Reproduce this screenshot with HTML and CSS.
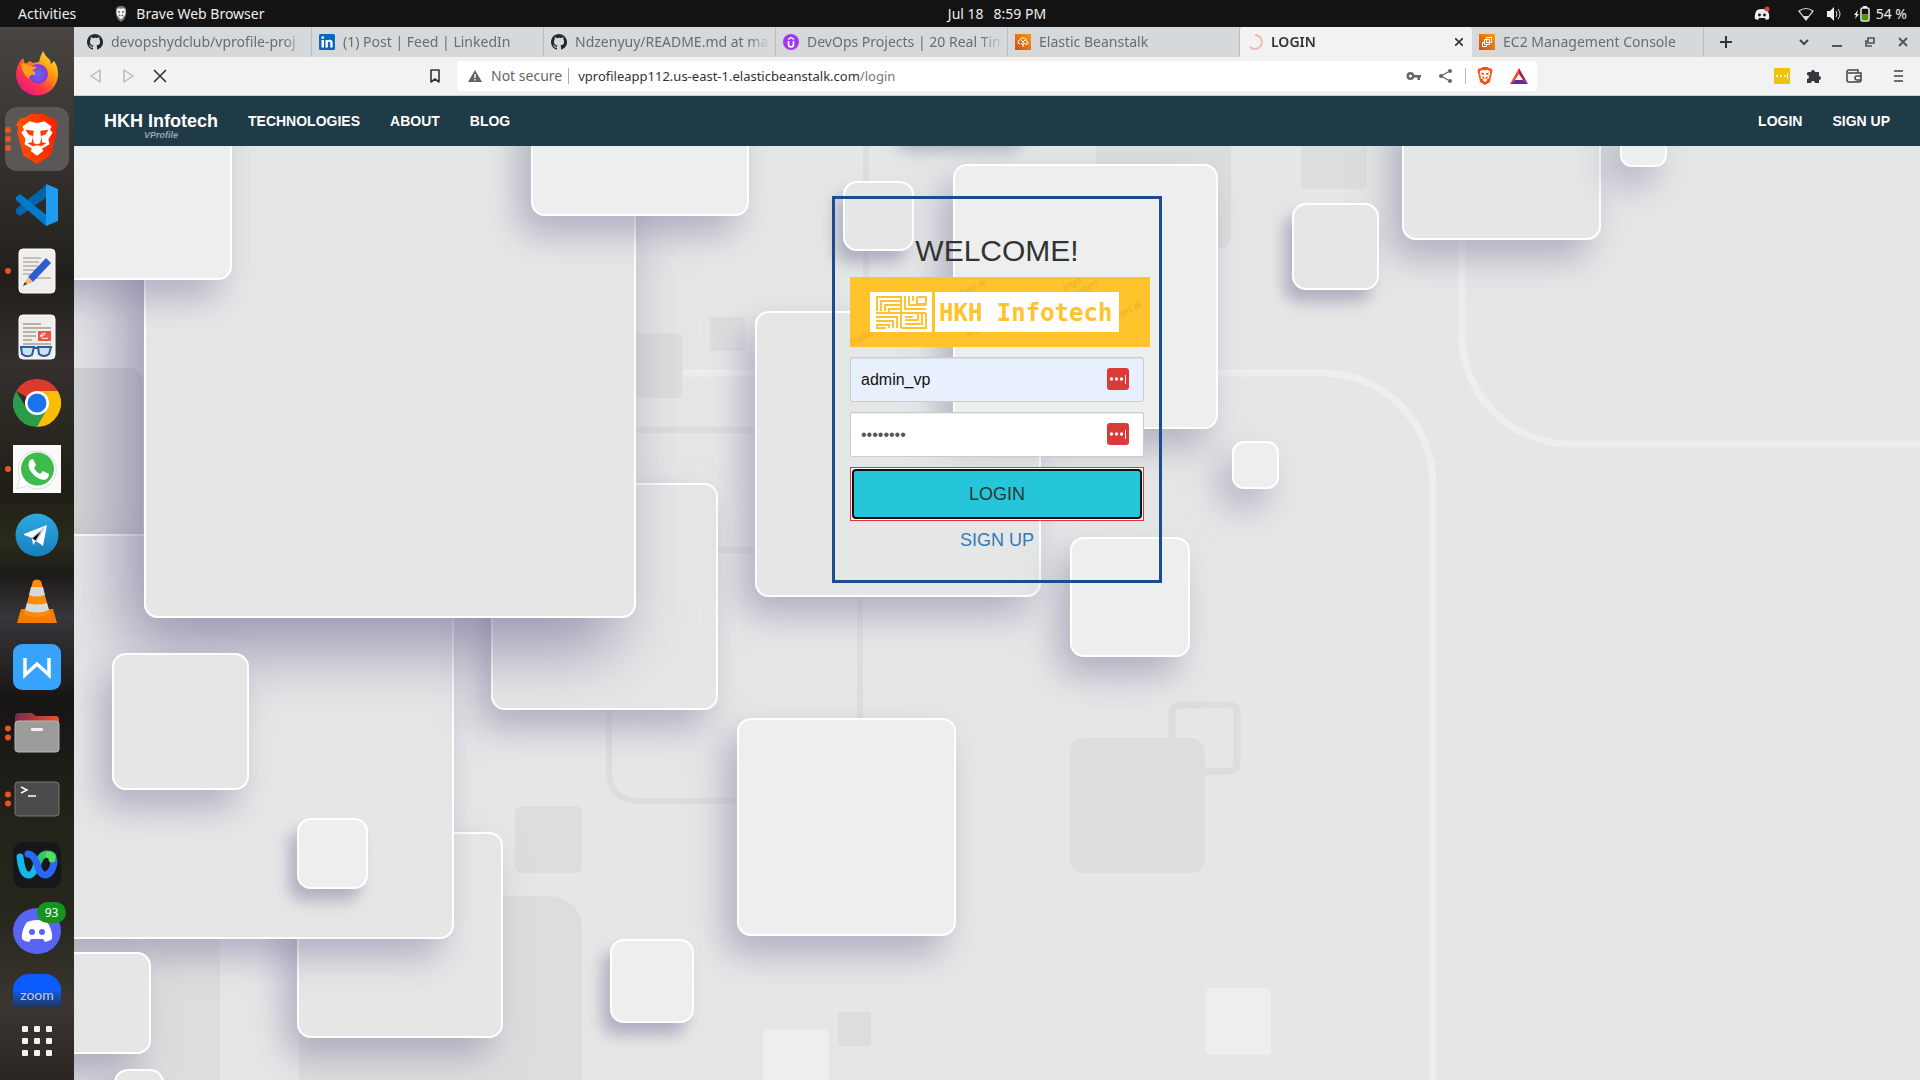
FILE: index.html
```html
<!DOCTYPE html>
<html lang="en">
<head>
<meta charset="utf-8">
<title>LOGIN</title>
<link rel="stylesheet" href="styles.css">
</head>
<body>
<svg class="defs" aria-hidden="true">
  <defs>
    <symbol id="github" viewBox="0 0 16 16"><path fill="#24292f" d="M8 0C3.58 0 0 3.58 0 8c0 3.54 2.29 6.53 5.47 7.59.4.07.55-.17.55-.38v-1.49c-2.01.37-2.53-.49-2.69-.94-.09-.23-.48-.94-.82-1.13-.28-.15-.68-.52-.01-.53.63-.01 1.08.58 1.23.82.72 1.21 1.87.87 2.33.66.07-.52.28-.87.51-1.07-1.78-.2-3.64-.89-3.64-3.95 0-.87.31-1.59.82-2.15-.08-.2-.36-1.02.08-2.12 0 0 .67-.21 2.2.82A7.7 7.7 0 0 1 8 3.87c.68 0 1.36.09 2 .27 1.53-1.04 2.2-.82 2.2-.82.44 1.1.16 1.92.08 2.12.51.56.82 1.27.82 2.15 0 3.07-1.87 3.75-3.65 3.95.29.25.54.73.54 1.48v2.2c0 .21.15.46.55.38A8 8 0 0 0 8 0Z"/></symbol>
    <linearGradient id="aws" x1="0" y1="1" x2="1" y2="0"><stop stop-color="#c8511b"/><stop offset="1" stop-color="#f90"/></linearGradient>
    <linearGradient id="lionfill" x1="0" x2="1"><stop stop-color="#ff5500"/><stop offset="1" stop-color="#ff2000"/></linearGradient>
    <symbol id="lionface" viewBox="0 0 40 48"><path fill="#fff" d="m6 12 7-5 5 1.500h4L27 7l7 5-1.500 3 2.500 3-4 6 1 5-7 4 1 2.500-6 4.500-6-4.500 1-2.500-7-4 1-5-4-6 2.500-3Z"/><path fill="#ff3d0b" d="m9 15 8 1-1 7 1 5 3 1 3-1 1-5-1-7 8-1-3 5-4 1 1 6 4 1-5 3-4-1-4 1-5-3 4-1 1-6-4-1Z"/></symbol>
    <symbol id="passdots" viewBox="0 0 22 22"><rect width="22" height="22" rx="3" fill="#da3b38"/><g fill="#fff"><circle cx="4.500" cy="11" r="1.700"/><circle cx="9.500" cy="11" r="1.700"/><circle cx="14.500" cy="11" r="1.700"/><path d="M18 7h1v9h-1z"/></g></symbol>
  </defs>
</svg>

<header class="topbar">
  <div class="topbar-left">
    <span>Activities</span>
    <span class="app-name"><svg width="14" height="16" viewBox="0 0 40 48"><path fill="#777" d="m9 3 5-3h12l5 3 5 5-2 5 2 10-6 17-10 8-10-8L4 23l2-10-2-5Z"/><use href="#lionface"/></svg>Brave Web Browser</span>
  </div>
  <div class="topbar-clock"><span>Jul 18</span><span>8:59 PM</span></div>
  <div class="topbar-right">
    <svg class="tray-discord" width="16" height="16" viewBox="0 0 16 16"><path fill="#eee" d="M3 4q5-2 10 0 3 4 2 9l-3 1-1-2H5l-1 2-3-1Q0 8 3 4Z"/><circle cx="5.500" cy="9" r="1.400" fill="#131313"/><circle cx="10.500" cy="9" r="1.400" fill="#131313"/><circle cx="13" cy="3" r="2.500" fill="#e33f3c"/></svg>
    <svg width="16" height="16" viewBox="0 0 16 16"><path fill="none" stroke="#ddd" stroke-width="1.200" d="M1 5q7-5 14 0L8 14Z"/><path fill="#ddd" d="M5 10h6l-3 4Z"/></svg>
    <svg width="16" height="16" viewBox="0 0 16 16"><path fill="#eee" d="M1 5h3l4-4v14l-4-4H1Z"/><path fill="none" stroke="#ddd" d="M10 5q2 3 0 6M12 3q4 5 0 10"/></svg>
    <span class="battery"><svg width="16" height="18" viewBox="0 0 16 18"><path fill="#eee" d="M4 5 0 10h2l-1 4 4-5H3Z"/><rect x="7" y="3" width="8" height="13" rx="1.500" fill="none" stroke="#eee" stroke-width="1.500"/><path fill="#eee" d="M9 1h4v2H9z"/><path fill="#4e9a06" d="M8 9h6v6H8z"/></svg>54 %</span>
  </div>
</header>

<div class="desktop">
  <nav class="dock" aria-label="Dock">
    <a class="slot" href="#firefox" aria-label="Firefox"><svg width="44" height="46" viewBox="0 0 44 46"><defs><linearGradient id="ff" x1="1" y1="0" x2=".2" y2="1"><stop stop-color="#fff44f"/><stop offset=".4" stop-color="#ff980e"/><stop offset=".7" stop-color="#ff3647"/><stop offset="1" stop-color="#e31587"/></linearGradient><radialGradient id="ffp"><stop stop-color="#5b6df8"/><stop offset="1" stop-color="#9032d8"/></radialGradient></defs><path fill="url(#ff)" d="M28 1q2 5 7 9l1 4 3-3q4 5 4 13A21 21 0 0 1 1 25Q1 15 8 8l2 6 5-3 3 2 6-1q1-6 4-11Z"/><circle cx="23" cy="24" r="10" fill="url(#ffp)"/><path fill="#ffa117" d="M6 14q5-2 8 2l8 1-5 4q4 0 3 4-6-1-6 4-7-5-8-15Z"/></svg></a>
    <a class="slot" href="#brave" aria-label="Brave"><span class="dots"><i></i><i></i><i></i></span><span class="running"><svg width="42" height="50" viewBox="0 0 40 48"><path fill="url(#lionfill)" d="m9 3 5-3h12l5 3 5 1 4 6-2 4 1 4-6 22-13 8-13-8L1 18l1-4-2-4 4-6Z"/><use href="#lionface"/></svg></span></a>
    <a class="slot" href="#code" aria-label="Code"><svg width="42" height="42" viewBox="0 0 42 42"><path fill="#0065a9" d="m30 1 4 10L4 32l-4-3v-4Z"/><path fill="#007acc" d="m4 10 29 23-3 9L0 16v-3Z"/><path fill="#1f9cf0" d="m30 0 12 5v32l-12 5Z"/></svg></a>
    <a class="slot" href="#editor" aria-label="Text Editor"><span class="dots"><i></i></span><svg width="38" height="46" viewBox="0 0 38 46"><rect x="1" y="1" width="36" height="44" rx="4" fill="#eeeeed" stroke="#fff"/><path stroke="#c4c0b3" stroke-width="2" d="M5 10h18M5 14h16M5 18h15M5 22h14M5 26h8M12 30h21"/><path fill="#2d5bd1" d="m28 10 5 5-18 19-5-5Z"/><path fill="#f3b77c" d="m10 29 5 5-10 4Z"/><path fill="#333" d="m7 34 2 2-4 2Z"/></svg></a>
    <a class="slot" href="#viewer" aria-label="Document Viewer"><svg width="38" height="46" viewBox="0 0 38 46"><rect x="1" y="1" width="36" height="44" rx="4" fill="#eeeeed" stroke="#fff"/><path stroke="#b7b2a4" stroke-width="2" d="M5 10h18M5 14h28M5 18h13M5 22h13M5 26h9M5 30h28"/><path fill="#f05548" d="M20 17h13v10H20z"/><path fill="none" stroke="#fff" d="M22 22q5 0 5-2t-4 1q0 5 7 3"/><path fill="#cfe0ee" stroke="#2c5b9c" stroke-width="2" d="M3 33h13l-2 8q-5 3-10-1ZM20 33h13l-2 7q-5 4-10 0Z"/><path stroke="#2c5b9c" stroke-width="2" d="M15 34h6"/></svg></a>
    <a class="slot" href="#chrome" aria-label="Chrome"><svg width="48" height="48" viewBox="0 0 48 48"><path fill="#db3a2f" d="M24 24 3.200 12a24 24 0 0 1 41.600 0Z"/><path fill="#fbbc05" d="M24 24V12h20.800A24 24 0 0 1 24 48Z"/><path fill="#2c9c4b" d="m24 24 10 6-10 18A24 24 0 0 1 3.200 12L14 30Z"/><circle cx="24" cy="24" r="12" fill="#fff"/><circle cx="24" cy="24" r="9.500" fill="#1a73e8"/></svg></a>
    <a class="slot" href="#whatsapp" aria-label="WhatsApp"><span class="dots"><i></i></span><svg width="48" height="48" viewBox="0 0 48 48"><path fill="#fafafa" d="M0 0h48v48H0z"/><path fill="#fff" stroke="#ddd" d="m4 44 3-11a19 19 0 1 1 7 8Z"/><circle cx="24.500" cy="24" r="16.500" fill="#3dbb4c"/><path fill="#fff" d="m17 15 3-1 3 6-2 3q2 4 6 6l3-3 6 3q0 5-5 6-7-1-12-7-6-7-2-13Z"/></svg></a>
    <a class="slot" href="#telegram" aria-label="Telegram"><svg width="44" height="44" viewBox="0 0 44 44"><defs><linearGradient id="tg" x2="0" y2="1"><stop stop-color="#2fa9e2"/><stop offset="1" stop-color="#1580bd"/></linearGradient></defs><circle cx="22" cy="22" r="21.500" fill="url(#tg)"/><path fill="#fff" d="m9 21 23-9-4 21-7-5-3 4-1-7-8-3Z"/><path stroke="#b4d4e8" stroke-width="1.500" d="m17 25 12-10-8 13"/></svg></a>
    <a class="slot" href="#vlc" aria-label="VLC"><svg width="42" height="46" viewBox="0 0 42 46"><path fill="#f57c00" d="m5 31h32l4 14H1Z"/><path fill="#ff8b0a" d="M17 3q4-3 8 0l9 33q-13 6-26 0Z"/><path fill="#d5d9dc" d="m15 9h12l2 8q-8 3-16 0ZM11 25q10 3 20 0l2 7q-12 5-24 0Z"/></svg></a>
    <a class="slot" href="#wps" aria-label="WPS Writer"><svg width="48" height="46" viewBox="0 0 48 46"><rect width="48" height="46" rx="9" fill="#38a3fc"/><path fill="none" stroke="#fff" stroke-width="3.500" d="M12 14v17l12-11 12 11V14"/></svg></a>
    <a class="slot" href="#files" aria-label="Files"><span class="dots"><i></i><i></i></span><svg width="46" height="42" viewBox="0 0 46 42"><defs><linearGradient id="fold"><stop stop-color="#7d2850"/><stop offset="1" stop-color="#e95420"/></linearGradient></defs><path fill="url(#fold)" d="M1 5q0-4 4-4h13l4 3h20q3 0 3 4v10H1Z"/><rect x="1" y="9" width="44" height="31" rx="3" fill="#9c9c9b" stroke="#b8b8b6"/><rect x="17" y="16" width="12" height="3" rx="1" fill="#f1f1ef"/></svg></a>
    <a class="slot" href="#terminal" aria-label="Terminal"><span class="dots"><i></i><i></i></span><svg width="46" height="36" viewBox="0 0 46 36"><rect x="1" y="1" width="44" height="34" rx="3" fill="#4a4a4a" stroke="#777"/><path fill="none" stroke="#fff" stroke-width="1.500" d="m7 6 6 3-6 3M14 15h8"/></svg></a>
    <a class="slot" href="#webex" aria-label="Webex"><svg width="48" height="46" viewBox="0 0 48 46"><rect width="48" height="46" rx="10" fill="#161718"/><g fill="none" stroke-width="7" stroke-linecap="round"><path stroke="#35c46b" d="M24 25q3-13 10-13 6 0 6 4"/><path stroke="#14b8e8" d="M7 15q2 19 9 18 5 0 8-12"/><path stroke="#2b67f5" d="M15 12q6 0 10 13 3 9 8 8 7-2 8-14"/><path stroke="#55df60" d="M36 13q3 1 3 4"/></g></svg></a>
    <a class="slot" href="#discord" aria-label="Discord"><svg width="48" height="46" viewBox="0 0 48 46"><ellipse cx="24" cy="23" rx="24" ry="23" fill="#5865f2"/><path fill="#fff" d="M14 14q10-4 20 0 6 8 5 17-4 3-7 3l-2-3H18l-2 3q-4 0-7-3-1-9 5-17Z"/><circle cx="19" cy="24" r="3" fill="#5865f2"/><circle cx="29" cy="24" r="3" fill="#5865f2"/></svg><span class="badge">93</span></a>
    <a class="slot slot-zoom" href="#zoom" aria-label="Zoom"><span class="zoom-tile">zoom</span></a>
    <a class="slot" href="#apps" aria-label="Show Applications"><svg width="30" height="30" viewBox="0 0 30 30" fill="#f2f2f2"><rect width="6" height="6" rx="1"/><rect x="12" width="6" height="6" rx="1"/><rect x="24" width="6" height="6" rx="1"/><rect y="12" width="6" height="6" rx="1"/><rect x="12" y="12" width="6" height="6" rx="1"/><rect x="24" y="12" width="6" height="6" rx="1"/><rect y="24" width="6" height="6" rx="1"/><rect x="12" y="24" width="6" height="6" rx="1"/><rect x="24" y="24" width="6" height="6" rx="1"/></svg></a>
  </nav>

  <div class="browser">
    <div class="tabs">
      <div class="tab"><svg width="16" height="16"><use href="#github"/></svg><span>devopshydclub/vprofile-proj</span></div>
      <div class="tab"><svg width="16" height="16" viewBox="0 0 16 16"><rect width="16" height="16" rx="1.500" fill="#0a66c2"/><path fill="#fff" d="M2.500 6H5v7.500H2.500zM2.300 3.600a1.400 1.400 0 1 1 2.800 0 1.400 1.400 0 0 1-2.800 0ZM6.500 6h2.300v1c1-1.800 4.800-1.800 4.800 1.700v4.800h-2.300V9.300c0-2-2.400-1.800-2.400 0v4.200H6.500z"/></svg><span>(1) Post | Feed | LinkedIn</span></div>
      <div class="tab"><svg width="16" height="16"><use href="#github"/></svg><span>Ndzenyuy/README.md at ma</span></div>
      <div class="tab"><svg width="16" height="16" viewBox="0 0 16 16"><circle cx="8" cy="8" r="8" fill="#a435f0"/><path fill="none" stroke="#fff" stroke-width="1.700" d="M5.500 7v3q0 3 2.500 3t2.500-3V7"/><path fill="none" stroke="#fff" stroke-width="1.300" d="M5 5.500 8 3.500l3 2"/></svg><span>DevOps Projects | 20 Real Tim</span></div>
      <div class="tab"><svg width="16" height="16" viewBox="0 0 16 16"><path fill="url(#aws)" d="M0 0h16v16H0z"/><path fill="none" stroke="#fff" d="M5 10q-2 0-2-2t2-2q1-3 4-2t2 3q2 0 2 2t-3 1M8 13V8M6 9l2 2 2-2M6 6l2 2 2-2"/></svg><span>Elastic Beanstalk</span></div>
      <div class="tab active"><svg width="16" height="16" viewBox="0 0 16 16"><path fill="none" stroke="#f3b8b4" stroke-width="1.800" d="M8 1a7 7 0 1 1-5 12"/></svg><span>LOGIN</span><button class="close" aria-label="Close tab"><svg width="8" height="8" viewBox="0 0 8 8"><path stroke="#333" stroke-width="1.600" d="m0 0 8 8M8 0 0 8"/></svg></button></div>
      <div class="tab"><svg width="16" height="16" viewBox="0 0 16 16"><path fill="url(#aws)" d="M0 0h16v16H0z"/><path fill="none" stroke="#fff" d="M7.500 3.500h5v5h-5zM5.500 5.500h5v5h-5zM5 8.500H3.500v4h4V11"/></svg><span>EC2 Management Console</span></div>
      <div class="window-controls">
        <button class="new-tab" aria-label="New tab"><svg width="14" height="14" viewBox="0 0 14 14"><path stroke="#333" stroke-width="2" d="M7 1v12M1 7h12"/></svg></button>
        <button aria-label="Search tabs"><svg width="12" height="12" viewBox="0 0 12 12"><path fill="none" stroke="#444" stroke-width="2" d="m2 4 4 4 4-4"/></svg></button>
        <button aria-label="Minimize"><svg width="12" height="12" viewBox="0 0 12 12"><path stroke="#555" stroke-width="2" d="M1 10h10"/></svg></button>
        <button aria-label="Restore"><svg width="12" height="12" viewBox="0 0 12 12"><path fill="none" stroke="#555" stroke-width="1.700" d="M4 2h6v5H4zM2 4v6h6"/></svg></button>
        <button aria-label="Close"><svg width="12" height="12" viewBox="0 0 12 12"><path stroke="#555" stroke-width="2" d="m2 2 8 8m0-8-8 8"/></svg></button>
      </div>
    </div>

    <div class="toolbar">
      <div class="tool-left">
        <button aria-label="Back"><svg width="16" height="16" viewBox="0 0 16 16"><path fill="none" stroke="#bbb" stroke-width="1.500" stroke-linejoin="round" d="M12 2v12L3 8Z"/></svg></button>
        <button aria-label="Forward"><svg width="16" height="16" viewBox="0 0 16 16"><path fill="none" stroke="#bbb" stroke-width="1.500" stroke-linejoin="round" d="M4 2v12l9-6Z"/></svg></button>
        <button aria-label="Stop"><svg width="16" height="16" viewBox="0 0 16 16"><path stroke="#333" stroke-width="1.600" d="m2 2 12 12m0-12L2 14"/></svg></button>
        <button class="bookmark" aria-label="Bookmark"><svg width="16" height="16" viewBox="0 0 16 16"><path fill="none" stroke="#333" stroke-width="1.600" stroke-linejoin="round" d="M4 2h8v12l-4-3-4 3Z"/></svg></button>
      </div>
      <div class="address">
        <svg width="14" height="14" viewBox="0 0 14 14"><path fill="#5f6368" d="m7 1 7 12H0Z"/><path stroke="#fff" stroke-width="1.400" d="M7 5v4m0 1v1.500"/></svg>
        <span class="insecure">Not secure</span>
        <span class="url">vprofileapp112.us-east-1.elasticbeanstalk.com<span>/login</span></span>
        <svg width="16" height="16" viewBox="0 0 16 16"><path fill="#666" fill-rule="evenodd" d="M4.500 4q3 0 4 3H15v2.500h-1V12h-2.500V9.500h-3q-1 2.500-4 2.500a4 4 0 0 1 0-8Zm0 2.500a1.500 1.500 0 1 0 0 3 1.500 1.500 0 0 0 0-3Z"/></svg>
        <svg class="share" width="16" height="16" viewBox="0 0 16 16"><path fill="none" stroke="#666" stroke-width="1.300" d="M12 3 3 8l9 5"/><g fill="#666"><circle cx="12" cy="3" r="2"/><circle cx="3" cy="8" r="2"/><circle cx="12" cy="13" r="2"/></g></svg>
        <span class="divider"></span>
        <svg width="16" height="18" viewBox="0 0 40 48"><path fill="#ff4a0d" d="m9 3 5-3h12l5 3 6 1 3 6-2 8-5 22-13 8-13-8L2 18 0 10l3-6Z"/><use href="#lionface"/></svg>
        <svg class="bat" width="18" height="16" viewBox="0 0 18 16"><path fill="#ff4724" d="M9 0 0 16l5-4 4-6Z"/><path fill="#9e1f63" d="m9 0 9 16-5-4-4-6Z"/><path fill="#662d91" d="m0 16 5-4h8l5 4Z"/></svg>
      </div>
      <div class="tool-right">
        <svg width="16" height="16" viewBox="0 0 16 16"><rect width="16" height="16" rx="1" fill="#efc20f"/><g fill="#fff"><circle cx="3" cy="8" r="1"/><circle cx="7" cy="8" r="1"/><circle cx="11" cy="8" r="1"/><path d="M13 5h1v6h-1z"/></g></svg>
        <svg width="16" height="16" viewBox="0 0 16 16"><path fill="#37383d" d="M2 4h3a2 2 0 1 1 4 0h4v4a2 2 0 1 1 0 4v3H9a2 2 0 1 0-4 0H1v-4a2 2 0 1 0 0-4V5Z"/></svg>
        <svg class="wallet" width="16" height="16" viewBox="0 0 16 16"><path fill="none" stroke="#444" stroke-width="1.500" d="M1 4q0-2 2-2h9v3H2M1 4v8q0 2 2 2h10q2 0 2-2V5h-3m3 3h-4a2 2 0 0 0 0 4h4"/></svg>
        <svg class="menu" width="16" height="16" viewBox="0 0 16 16"><path stroke="#444" stroke-width="1.600" d="M4 3h9M4 8h9M4 13h9"/></svg>
      </div>
    </div>

    <div class="page">
      <nav class="site-nav">
        <a class="brand" href="#home">HKH Infotech<small>VProfile</small></a>
        <a href="#technologies">TECHNOLOGIES</a>
        <a href="#about">ABOUT</a>
        <a href="#blog">BLOG</a>
        <a class="push" href="#login">LOGIN</a>
        <a href="#signup">SIGN UP</a>
      </nav>
      <main class="stage">
        <svg class="backdrop" viewBox="74 146 1846 934" preserveAspectRatio="xMinYMin slice" aria-hidden="true">
          <defs>
            <filter id="deep" x="-40%" y="-40%" width="180%" height="180%"><feDropShadow dx="-20" dy="30" stdDeviation="34" flood-color="#75729a" flood-opacity=".7"/></filter>
            <filter id="mid" x="-150%" y="-150%" width="400%" height="400%"><feDropShadow dx="-12" dy="18" stdDeviation="18" flood-color="#7f7ca0" flood-opacity=".52"/></filter>
            <filter id="low" x="-60%" y="-60%" width="220%" height="220%"><feDropShadow dx="-8" dy="12" stdDeviation="8" flood-color="#8481a4" flood-opacity=".55"/></filter>
          </defs>
          <path fill="#e5e7e6" d="M74 146h1846v934H74z"/>
          <g fill="#dcdedd">
            <rect x="40" y="368" width="103" height="200" rx="14" fill="#d2d4d3"/>
            <rect x="40" y="900" width="180" height="220"/>
            <rect x="299" y="896" width="283" height="220" rx="32"/>
            <rect x="515" y="806" width="67" height="67" rx="6"/>
            <rect x="710" y="317" width="35" height="34" rx="2"/>
            <rect x="600" y="333" width="82" height="65" rx="4"/>
            <rect x="838" y="1012" width="33" height="34" rx="2"/>
            <rect x="1070" y="738" width="135" height="135" rx="14"/>
            <rect x="1096" y="120" width="135" height="129" rx="14"/>
            <rect x="1301" y="120" width="66" height="69" rx="5"/>
          </g>
          <g fill="none" stroke="#dcdedd" stroke-width="6">
            <path d="M635 430h125M717 550h43M860 590v130M866 146v165M609 700v71q0 30 30 30h100"/>
            <rect x="1172" y="705" width="65" height="66" rx="7" stroke-width="7"/>
          </g>
          <g fill="none" stroke="#edefee" stroke-width="7">
            <path d="M683 373h639a111 111 0 0 1 111 111v596M1462 146v189a109 109 0 0 0 109 109h349"/>
          </g>
          <g fill="#edefee"><rect x="1205" y="988" width="66" height="67" rx="6"/><rect x="763" y="1029" width="66" height="80" rx="6"/></g>
          <g fill="#e5e7e6" stroke="#fff" stroke-width="2">
            <rect x="298" y="833" width="204" height="204" rx="13" filter="url(#mid)"/>
            <rect x="-60" y="535" width="513" height="403" rx="13" filter="url(#mid)"/>
            <rect x="492" y="484" width="225" height="225" rx="13" filter="url(#mid)"/>
            <rect x="756" y="312" width="284" height="284" rx="13" filter="url(#mid)"/>
            <rect x="145" y="60" width="490" height="557" rx="13" filter="url(#deep)"/>
            <rect x="113" y="654" width="135" height="135" rx="13" filter="url(#mid)"/>
            <rect x="20" y="953" width="130" height="100" rx="13" filter="url(#mid)"/>
            <rect x="115" y="1070" width="48" height="60" rx="13" filter="url(#low)"/>
            <rect x="1403" y="60" width="197" height="179" rx="13" filter="url(#mid)"/>
            <rect x="1293" y="204" width="85" height="85" rx="13" filter="url(#low)"/>
            <rect x="904" y="60" width="126" height="78" rx="13" filter="url(#low)"/>
          </g>
          <g fill="#edefee" stroke="#fff" stroke-width="2">
            <rect x="954" y="165" width="263" height="263" rx="13" filter="url(#mid)"/>
            <rect x="-20" y="80" width="251" height="199" rx="13" filter="url(#mid)"/>
            <rect x="532" y="60" width="216" height="155" rx="13" filter="url(#mid)"/>
            <rect x="298" y="819" width="69" height="69" rx="13" filter="url(#low)"/>
            <rect x="738" y="719" width="217" height="216" rx="13" filter="url(#mid)"/>
            <rect x="611" y="940" width="82" height="82" rx="13" filter="url(#low)"/>
            <rect x="1071" y="538" width="118" height="118" rx="13" filter="url(#mid)"/>
            <rect x="1621" y="120" width="45" height="46" rx="11" filter="url(#mid)"/>
            <rect x="1233" y="442" width="45" height="46" rx="11" filter="url(#mid)"/>
            <rect x="844" y="182" width="69" height="68" rx="13" fill="#e5e7e6" filter="url(#low)"/>
          </g>
        </svg>
        <form class="login">
          <h1>WELCOME!</h1>
          <svg class="logo" width="300" height="70" viewBox="0 0 300 70" role="img" aria-label="HKH Infotech">
            <path fill="#ffc32b" d="M0 0h300v70H0z"/>
            <g class="watermark"><text transform="translate(2 69) rotate(-28)">makerr.ai</text><text transform="translate(100 26) rotate(-28)">makerr.ai</text><text transform="translate(215 14) rotate(-28)">logo</text><text transform="translate(222 22) rotate(-28)">makerr</text><text transform="translate(118 60) rotate(-28)">logo</text><text transform="translate(268 42) rotate(-28)">kerr.ai</text></g>
            <path fill="#fff" d="M20 15h249v40H20z"/>
            <path fill="#ffc32b" d="M82 15h3v40h-3z"/>
            <g fill="none" stroke="#ffc32b" stroke-width="2"><path d="M51 20H27v14M51 24H31v10M51 28H35v6M51 32H39v3M51 19v17M55 19v13h21M59 19v9h17M63 19v5M67 20h9v7h-9v-7M26 36h50M26 40h21v11M26 44h17v7M39 51v-3H27v3h9M51 36v15M51 51h25V36M55 47h17V36M55 43h13v-7M55 40h8"/></g>
            <text class="logo-name" x="89" y="44">HKH Infotech</text>
          </svg>
          <div class="field"><input class="filled" type="text" value="admin_vp" aria-label="Username"><svg width="22" height="22"><use href="#passdots"/></svg></div>
          <div class="field"><input type="password" value="password" aria-label="Password"><svg width="22" height="22"><use href="#passdots"/></svg></div>
          <button class="submit" type="button"><span>LOGIN</span></button>
          <a class="signup" href="#signup">SIGN UP</a>
        </form>
      </main>
    </div>
  </div>
</div>
</body>
</html>
```
FILE: styles.css
```css
* { box-sizing: border-box; }
body {
  margin: 0;
  height: 100vh;
  display: flex;
  flex-direction: column;
  overflow: hidden;
  font: 14px/20px "Noto Sans", sans-serif;
}
svg { display: block; flex: none; }
.defs { position: absolute; width: 0; height: 0; }
button { border: 0; padding: 0; background: none; font: inherit; }
a { color: inherit; text-decoration: none; }

/* Desktop top bar */
.topbar {
  flex: none;
  height: 27px;
  display: grid;
  grid-template-columns: 1fr auto 1fr;
  align-items: center;
  background: #131313;
  color: #eee;
}
.topbar-left, .topbar-clock, .topbar-right, .app-name, .battery { display: flex; align-items: center; }
.topbar-left { padding-left: 18px; gap: 38px; }
.app-name { gap: 8px; }
.app-name svg { filter: grayscale(1); }
.topbar-clock { gap: 10px; padding-left: 74px; }
.topbar-right { justify-content: flex-end; padding-right: 13px; gap: 12px; }
.tray-discord { margin-right: 16px; }
.battery { gap: 6px; }

.desktop { flex: 1; min-height: 0; display: flex; }

/* Dock */
.dock {
  flex: none;
  width: 74px;
  padding-top: 13px;
  display: flex;
  flex-direction: column;
  background: linear-gradient(#484543, #37322f 12%, #211e1c 24%, #35302e 32%, #201e15 44%, #2a2b1b 49%, #1c1b18 52%, #38363a 56%, #171514 64%, #24231a 76%, #26261d 84%, #3b3632 93%, #2c2622);
}
.slot { position: relative; height: 66px; display: grid; place-items: center; }
.running {
  width: 64px;
  height: 64px;
  border-radius: 12px;
  display: grid;
  place-items: center;
  background: #5a5756;
}
.dots { position: absolute; left: 5px; top: 50%; transform: translateY(-50%); display: grid; gap: 3px; z-index: 1; }
.dots i { width: 6px; height: 6px; border-radius: 50%; background: #e95420; }
.badge {
  position: absolute;
  right: 8px;
  top: 4px;
  width: 29px;
  border-radius: 11px;
  background: #14931f;
  color: #fff;
  font-size: 12px;
  line-height: 21px;
  text-align: center;
}
.slot-zoom { height: 44px; align-items: end; }
.zoom-tile {
  width: 48px;
  height: 34px;
  padding-top: 11px;
  border-radius: 16px 16px 0 0;
  background: linear-gradient(#0b5cff 45%, #24354f);
  color: #c3ccdc;
  font: 14px/20px "Lato", sans-serif;
  text-align: center;
}

/* Browser chrome */
.browser { flex: 1; min-width: 0; display: flex; flex-direction: column; }
.tabs { flex: none; height: 30px; display: flex; padding-left: 6px; background: #d5d9dc; }
.tab {
  flex: 0 1 232px;
  min-width: 0;
  padding: 0 4px 0 7px;
  display: flex;
  align-items: center;
  gap: 8px;
  color: #6a6d70;
  border-right: 1px solid #b9bdc0;
}
.tab span {
  flex: 1;
  min-width: 0;
  overflow: hidden;
  white-space: nowrap;
  mask-image: linear-gradient(90deg, #000 88%, transparent);
}
.tab.active { padding-right: 8px; background: #f2f2f2; border-radius: 4px 4px 0 0; border-color: transparent; color: #333; font-weight: 600; }
.close { width: 8px; height: 8px; }
.window-controls { flex: 1; display: flex; align-items: center; justify-content: flex-end; gap: 21px; padding-right: 11px; }
.new-tab { margin: 0 auto 0 15px; }

.toolbar { flex: none; height: 39px; display: flex; align-items: center; background: #f2f2f2; border-bottom: 1px solid #ccd0d2; }
.tool-left, .tool-right { flex: 1; display: flex; align-items: center; padding: 0 14px; gap: 16px; }
.bookmark { margin-left: auto; }
.tool-right { justify-content: flex-end; }
.wallet { margin-left: 8px; }
.menu { margin-left: 12px; }
.address {
  flex: 0 1 1080px;
  height: 30px;
  padding: 0 9px 0 11px;
  display: flex;
  align-items: center;
  border-radius: 4px;
  background: #fff;
  color: #333;
  white-space: nowrap;
}
.insecure { margin-left: 9px; padding-right: 6px; border-right: 1px solid #aaa; color: #666; line-height: 16px; }
.url { flex: 1; margin-left: 9px; font-size: 13px; }
.url span { color: #777; }
.share { margin-left: 16px; }
.divider { width: 1px; height: 16px; margin: 0 11px; background: #bbb; }
.bat { margin-left: 17px; }

/* Web page */
.page { flex: 1; min-height: 0; display: flex; flex-direction: column; font-family: "Liberation Sans", Arial, sans-serif; }
.site-nav {
  flex: none;
  height: 50px;
  padding: 0 30px;
  display: flex;
  align-items: center;
  gap: 30px;
  background: #1e3b47;
  color: #fff;
  font-weight: bold;
}
.brand { padding-top: 8px; font-size: 18px; line-height: 20px; text-align: center; }
.brand small { display: block; color: #9aa5ab; font-size: 9px; line-height: 9px; font-style: italic; }
.push { margin-left: auto; }
.stage { position: relative; flex: 1; min-height: 0; padding-top: 50px; background: #e5e7e6; }
.backdrop { position: absolute; inset: 0; width: 100%; height: 100%; }

.login {
  position: relative;
  width: 330px;
  margin: 0 auto;
  padding: 35px 15px 31px;
  display: flex;
  flex-direction: column;
  gap: 10px;
  border: 3px solid #1f4b8e;
}
.login h1 { margin: 0; font-size: 30px; line-height: 33px; font-weight: normal; text-align: center; color: #333; }
.logo-name { font: bold 24px "DejaVu Sans Mono", monospace; fill: #ffc32b; }
.watermark { font-size: 10px; fill: #eab22a; }
.field { position: relative; }
.field svg { position: absolute; right: 15px; top: 11px; }
.field input {
  display: block;
  width: 100%;
  height: 45px;
  padding: 0 50px 0 10px;
  border: 1px solid #ccc;
  border-radius: 2px;
  background: #fff;
  box-shadow: inset 0 1px 1px rgba(0, 0, 0, .075);
  color: #555;
  font: 16px "Liberation Sans", Arial, sans-serif;
}
.field .filled { background: #e8f0fe; color: #111; }
.submit { padding: 1px; border: 1px solid #e23434; background: #fff; color: #333; font-size: 18px; }
.submit span { display: block; border: 2px solid #101010; border-radius: 4px; background: #26c6da; line-height: 46px; }
.signup { color: #337ab7; font-size: 18px; line-height: 18px; text-align: center; }
```
